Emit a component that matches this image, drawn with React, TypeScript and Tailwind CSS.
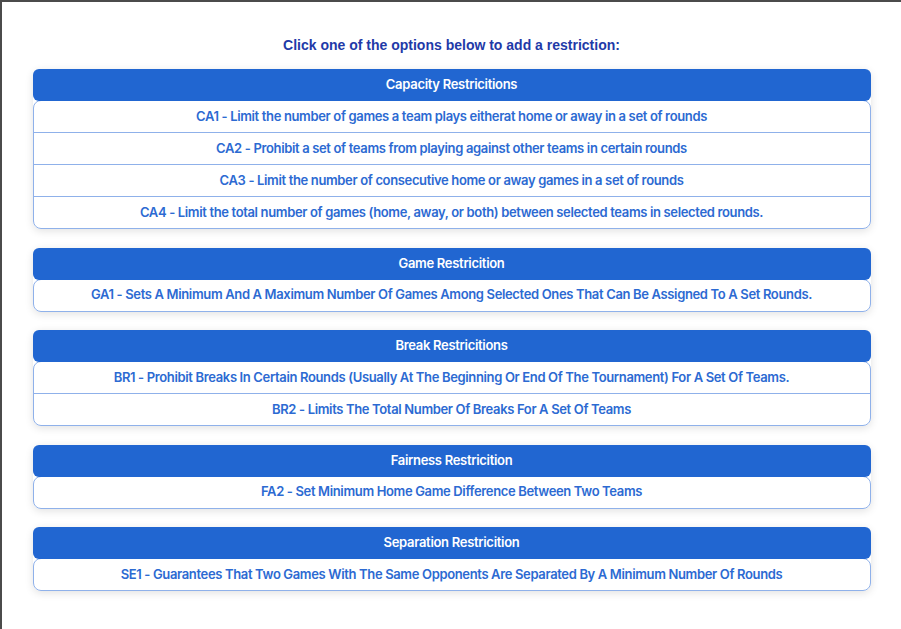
const groups = [
  {
    title: "Capacity Restricitions",
    items: [
      "CA1 - Limit the number of games a team plays eitherat home or away in a set of rounds",
      "CA2 - Prohibit a set of teams from playing against other teams in certain rounds",
      "CA3 - Limit the number of consecutive home or away games in a set of rounds",
      "CA4 - Limit the total number of games (home, away, or both) between selected teams in selected rounds.",
    ],
  },
  {
    title: "Game Restricition",
    items: [
      "GA1 - Sets A Minimum And A Maximum Number Of Games Among Selected Ones That Can Be Assigned To A Set Rounds.",
    ],
  },
  {
    title: "Break Restricitions",
    items: [
      "BR1 - Prohibit Breaks In Certain Rounds (Usually At The Beginning Or End Of The Tournament) For A Set Of Teams.",
      "BR2 - Limits The Total Number Of Breaks For A Set Of Teams",
    ],
  },
  {
    title: "Fairness Restricition",
    items: ["FA2 - Set Minimum Home Game Difference Between Two Teams"],
  },
  {
    title: "Separation Restricition",
    items: [
      "SE1 - Guarantees That Two Games With The Same Opponents Are Separated By A Minimum Number Of Rounds",
    ],
  },
];

function RestrictionGroup({ title, items }: { title: string; items: string[] }) {
  return (
    <div className="rounded-lg shadow-[0_2px_8px_rgba(0,0,0,0.12)]">
      <div className="relative z-10 h-8 flex items-center justify-center rounded-md bg-[#2166d1] text-white text-[13px] font-semibold tracking-[-0.3px]">
        {title}
      </div>
      <div className="-mt-px rounded-lg border border-[#8fb1ea] bg-white">
        {items.map((item, i) => (
          <div
            key={item}
            className={
              "flex items-center justify-center text-[13px] font-semibold tracking-[-0.35px] text-[#2c6ad2] cursor-pointer " +
              (i < items.length - 1 ? "h-8 border-b border-[#8fb1ea]" : "h-[31px]")
            }
          >
            {item}
          </div>
        ))}
      </div>
    </div>
  );
}

export default function App() {
  return (
    <div
      className="min-h-screen bg-white border-t-2 border-l-2 border-[#4b4b4b]"
      style={{ fontFamily: "Inter, 'Noto Sans', sans-serif" }}
    >
      <div className="w-[838px] mx-auto pt-[33px]">
        <h2
          className="text-center text-[14px] font-bold text-[#1f3aa8] mb-[13px]"
          style={{ fontFamily: "'Liberation Sans', Arial, sans-serif" }}
        >
          Click one of the options below to add a restriction:
        </h2>
        <div className="flex flex-col gap-[18.5px]">
          {groups.map((g) => (
            <RestrictionGroup key={g.title} title={g.title} items={g.items} />
          ))}
        </div>
      </div>
    </div>
  );
}
